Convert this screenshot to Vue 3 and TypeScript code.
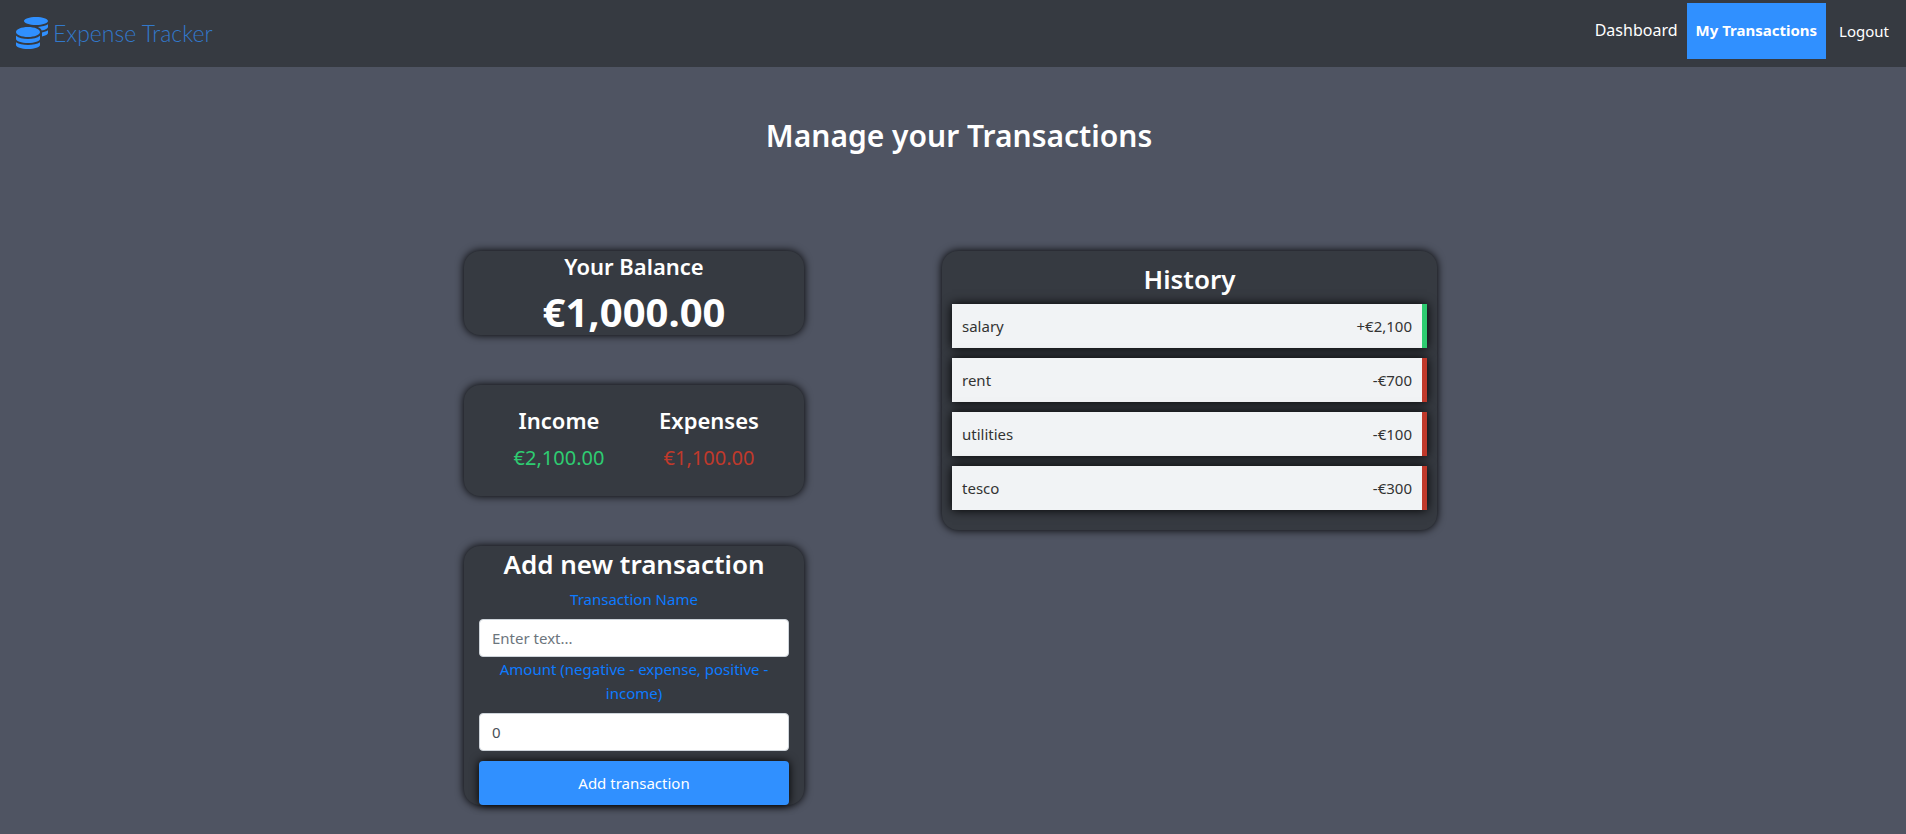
<script setup lang="ts">
import { computed, ref } from 'vue'

interface Transaction {
  id: number
  text: string
  amount: number
}

const transactions = ref<Transaction[]>([
  { id: 1, text: 'salary', amount: 2100 },
  { id: 2, text: 'rent', amount: -700 },
  { id: 3, text: 'utilities', amount: -100 },
  { id: 4, text: 'tesco', amount: -300 },
])

const name = ref('')
const amount = ref('0')

const sum = (items: Transaction[]) => items.reduce((total, t) => total + t.amount, 0)
const income = computed(() => sum(transactions.value.filter((t) => t.amount > 0)))
const expenses = computed(() => -sum(transactions.value.filter((t) => t.amount < 0)))
const balance = computed(() => income.value - expenses.value)

const money = (value: number) =>
  (value < 0 ? '-€' : '€') + Math.abs(value).toLocaleString('en-US', { minimumFractionDigits: 2 })
const signed = (value: number) =>
  (value < 0 ? '-' : '+') + '€' + Math.abs(value).toLocaleString('en-US')

function addTransaction() {
  const value = Number(amount.value)
  if (!name.value.trim() || !value) return
  transactions.value.push({ id: Date.now(), text: name.value, amount: value })
  name.value = ''
  amount.value = '0'
}
</script>

<template>
  <div class="page">
    <header class="navbar">
      <a class="brand" href="#">
        <svg class="coins" viewBox="0 0 512 512" aria-hidden="true">
          <path
            d="M0 405.3V448c0 35.3 86 64 192 64s192-28.7 192-64v-42.7C342.7 434.4 267.2 448 192 448S41.3 434.4 0 405.3zM320 128c106 0 192-28.7 192-64S426 0 320 0 128 28.7 128 64s86 64 192 64zM0 300.4V352c0 35.3 86 64 192 64s192-28.7 192-64v-51.6c-41.3 34-116.9 51.6-192 51.6S41.3 334.4 0 300.4zm416 11c57.3-11.1 96-31.7 96-55.4v-42.7c-23.2 16.4-57.3 27.6-96 34.5v63.6zM192 160C86 160 0 195.8 0 240s86 80 192 80 192-35.8 192-80-86-80-192-80zm219.3 56.3c60-10.8 100.7-32 100.7-56.3v-42.7c-35.5 25.1-96.5 38.6-160.7 41.8 29.5 14.3 51.2 33.5 60 57.2z"
          />
        </svg>
        <span class="brand-name">Expense Tracker</span>
      </a>
      <nav class="links">
        <a class="link" href="#">Dashboard</a>
        <a class="link active" href="#" aria-current="page">My Transactions</a>
        <button class="logout" type="button">Logout</button>
      </nav>
    </header>

    <main class="content">
      <h1 class="title">Manage your Transactions</h1>

      <div class="columns">
        <div class="stack">
          <section class="card">
            <h2 class="subheading">Your Balance</h2>
            <p class="total">{{ money(balance) }}</p>
          </section>

          <section class="card summary">
            <div>
              <h2 class="subheading">Income</h2>
              <p class="money plus">{{ money(income) }}</p>
            </div>
            <div>
              <h2 class="subheading">Expenses</h2>
              <p class="money minus">{{ money(expenses) }}</p>
            </div>
          </section>

          <section class="card add">
            <h2 class="heading">Add new transaction</h2>
            <form class="form" @submit.prevent="addTransaction">
              <label for="name">Transaction Name</label>
              <input id="name" v-model="name" type="text" placeholder="Enter text..." />
              <label for="amount">Amount (negative - expense, positive - income)</label>
              <input id="amount" v-model="amount" type="text" inputmode="decimal" />
              <button class="submit" type="submit">Add transaction</button>
            </form>
          </section>
        </div>

        <section class="card history">
          <h2 class="heading">History</h2>
          <ul class="list">
            <li
              v-for="t in transactions"
              :key="t.id"
              class="item"
              :class="t.amount < 0 ? 'item-minus' : 'item-plus'"
            >
              <span>{{ t.text }}</span>
              <span>{{ signed(t.amount) }}</span>
            </li>
          </ul>
        </section>
      </div>
    </main>
  </div>
</template>

<style>
body {
  margin: 0;
  background: #4f5462;
}
</style>

<style scoped>
.page,
.page * {
  box-sizing: border-box;
}

.page {
  min-height: 100vh;
  background: #4f5462;
  color: #fff;
  font-family: 'Segoe UI', 'Noto Sans', 'Open Sans', sans-serif;
  font-size: 15px;
  line-height: 24px;
}

h1,
h2,
p,
ul {
  margin: 0;
  padding: 0;
}

.navbar {
  display: flex;
  align-items: flex-start;
  justify-content: space-between;
  height: 67px;
  padding: 3px 17px 0 16px;
  background: #363a41;
}

.brand {
  display: flex;
  align-items: center;
  gap: 5px;
  height: 60px;
  color: #3090ff;
  text-decoration: none;
}

.coins {
  width: 32px;
  height: 32px;
  fill: currentColor;
}

.brand-name {
  color: #3278ca;
  font-family: Lato, sans-serif;
  font-size: 23px;
  font-weight: 300;
  line-height: 32px;
}

.links {
  display: flex;
}

.link {
  height: 56px;
  padding: 15px 9px;
  color: #fff;
  font-size: 16px;
  text-decoration: none;
}

.active {
  background: #3090ff;
  font-size: 15px;
  font-weight: 700;
}

.logout {
  margin-left: 13px;
  padding: 0;
  border: 0;
  background: none;
  color: inherit;
  font: inherit;
}

.content {
  padding: 49px 8px 29px;
}

.title {
  padding-left: 12px;
  font-size: 30px;
  font-weight: 600;
  line-height: 40px;
  text-align: center;
}

.columns {
  display: grid;
  grid-template-columns: minmax(0, 340fr) minmax(0, 495fr);
  align-items: start;
  gap: 48px 138px;
  max-width: 978px;
  margin: 95px auto 0;
  padding-right: 5px;
}

.stack {
  display: grid;
  gap: 50px;
}

.card {
  border-radius: 16px;
  background: #363a41;
  box-shadow: 0 0 8px #000;
  text-align: center;
}

.subheading {
  font-size: 22px;
  font-weight: 600;
  line-height: 30px;
}

.heading {
  font-size: 26px;
  font-weight: 600;
  line-height: 36px;
}

.total {
  margin-top: 8px;
  font-size: 40px;
  font-weight: 700;
  line-height: 46px;
}

.summary {
  display: grid;
  grid-template-columns: 1fr 1fr;
  padding: 20px 20px 23px;
}

.money {
  margin-top: 8px;
  font-size: 20px;
  line-height: 30px;
}

.plus {
  color: #2ecc71;
}

.minus {
  color: #c0392b;
}

.add {
  padding: 0 15px;
}

.form {
  display: flex;
  flex-direction: column;
  margin-top: 5px;
}

.form label {
  margin-bottom: 8px;
  color: #0d7bff;
}

.form input {
  width: 100%;
  height: 38px;
  padding: 6px 12px;
  border: 1px solid #ced4da;
  border-radius: 4px;
  background: #fff;
  color: #495057;
  font: inherit;
}

.form input::placeholder {
  color: #6c757d;
  opacity: 1;
}

.submit {
  height: 44px;
  margin-top: 10px;
  border: 0;
  border-radius: 4px;
  background: #3090ff;
  box-shadow: 0 0 10px #000;
  color: #fff;
  font: inherit;
}

.history {
  padding: 10px 10px 20px;
}

.list {
  display: grid;
  gap: 10px;
  padding-top: 7px;
  list-style: none;
}

.item {
  display: flex;
  justify-content: space-between;
  padding: 10px;
  border-right: 5px solid;
  background: #f1f3f5;
  box-shadow: 0 0 10px #000;
  color: #333;
}

.item-plus {
  border-color: #2ecc71;
}

.item-minus {
  border-color: #c0392b;
}

@media (max-width: 800px) {
  .columns {
    grid-template-columns: minmax(0, 1fr);
    max-width: 495px;
  }
}
</style>
